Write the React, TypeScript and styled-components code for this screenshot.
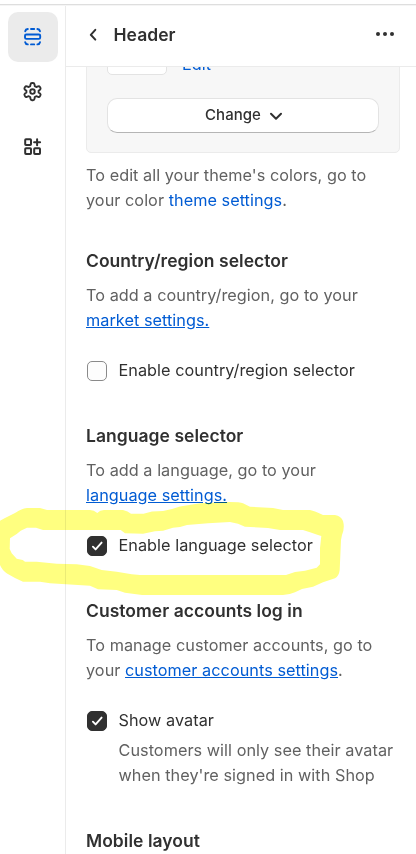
import React from 'react';
import styled, { createGlobalStyle } from 'styled-components';

const Global = createGlobalStyle`
  * { box-sizing: border-box; }
  body { margin: 0; background: #fff; overflow: hidden; }
`;

const Editor = styled.div`
  position: relative;
  width: 416px;
  height: 854px;
  overflow: hidden;
  display: flex;
  flex-direction: column;
  background: #fff;
  color: #303030;
  font: 400 16.25px/25px Inter, sans-serif;
  letter-spacing: 0.035px;
`;
const TopEdge = styled.div`
  flex: none;
  height: 6px;
  background: linear-gradient(#fff 0 4px, #dedede 4px 5px, #f5f5f5 5px 6px);
`;
const Body = styled.div`
  flex: 1;
  min-height: 0;
  display: flex;
`;
const Rail = styled.nav`
  width: 66px;
  flex: none;
  border-right: 1px solid #ebebeb;
  padding: 6px 7px 0 8px;
  display: flex;
  flex-direction: column;
  gap: 5px;
`;
const RailButton = styled.button<{ $active?: boolean }>`
  width: 50px;
  height: 50px;
  padding: 0;
  border: 0;
  border-radius: 10px;
  display: grid;
  place-items: center;
  background: ${p => (p.$active ? '#ebebeb' : 'transparent')};
  color: ${p => (p.$active ? '#005bd3' : '#303030')};
`;
const Panel = styled.main`
  flex: 1;
  min-width: 0;
  display: flex;
  flex-direction: column;
`;
const PanelHeader = styled.header`
  flex: none;
  height: 61px;
  padding: 0 18px 4px 20px;
  border-bottom: 1px solid #ebebeb;
  display: flex;
  align-items: center;
`;
const PanelTitle = styled.h1`
  flex: 1;
  margin: 0 0 0 13.5px;
  font-size: 17.5px;
  font-weight: 600;
  line-height: 25px;
`;
const IconButton = styled.button`
  border: 0;
  padding: 0;
  background: none;
  color: #303030;
  display: flex;
`;
const Scroller = styled.div`
  flex: 1;
  min-height: 0;
  overflow: hidden;
  padding: 0 16px 0 20px;
`;
const SchemeCard = styled.div`
  height: 126px;
  margin-top: -40px;
  padding: 0 20px;
  border: 1px solid #ebebeb;
  border-radius: 5px;
  background: #f7f7f7;
`;
const SchemeRow = styled.div`
  height: 47px;
  display: flex;
  align-items: flex-end;
  gap: 15px;
`;
const Swatch = styled.div`
  width: 60px;
  height: 46px;
  border: 1px solid #e3e3e3;
  border-radius: 5px;
  background: #fff;
`;
const Link = styled.a<{ $underline?: boolean }>`
  color: #005bd3;
  text-decoration: ${p => (p.$underline ? 'underline' : 'none')};
`;
const EditLink = styled(Link)`
  margin-bottom: -2px;
`;
const ChangeButton = styled.button`
  width: 100%;
  height: 35px;
  margin-top: 23px;
  padding: 0 0 2px 2px;
  border: 1px solid #e3e3e3;
  border-bottom-color: #b5b5b5;
  border-radius: 10px;
  background: #fff;
  color: #303030;
  font: 500 15px/20px Inter, sans-serif;
  letter-spacing: 0.03px;
  display: flex;
  align-items: center;
  justify-content: center;
  gap: 8px;
`;
const Text = styled.p`
  margin: 0;
  color: #616161;
`;
const Intro = styled(Text)`
  margin-top: 10px;
`;
const Section = styled.section`
  margin-top: 35px;

  & + & {
    margin-top: 40px;
  }
`;
const Heading = styled.h2`
  margin: 0 0 10px;
  font-size: 17.5px;
  line-height: 25px;
  font-weight: 600;
`;
const Option = styled.div`
  margin-top: 25px;
  display: grid;
  grid-template-columns: 20px 1fr;
  column-gap: 11.5px;
  padding-left: 1px;
`;
const Box = styled.span<{ $checked?: boolean }>`
  width: 20px;
  height: 20px;
  margin-top: 3px;
  border-radius: 5px;
  border: 1px solid ${p => (p.$checked ? '#303030' : '#8a8a8a')};
  background: ${p => (p.$checked ? '#303030' : '#fdfdfd')};
  display: grid;
  place-items: center;
`;
const Help = styled(Text)`
  grid-column: 2;
  margin-top: 5px;
`;
const Marker = styled.svg`
  position: absolute;
  inset: 0;
  pointer-events: none;
  mix-blend-mode: multiply;
`;

const stroke = { fill: 'none', stroke: 'currentColor', strokeWidth: 2, strokeLinecap: 'round' as const, strokeLinejoin: 'round' as const };

const SectionsIcon = () => (
  <svg width="26" height="26" viewBox="0 0 26 26" {...stroke} strokeWidth={1.9}>
    <rect x="5" y="10.5" width="15.2" height="4.4" rx="1.3" />
    <path d="M5.2 7.2Q5.6 5.2 7.8 5M11 5h3.2M17.4 5Q19.6 5.2 20 7.2M5.2 18.2Q5.6 20.2 7.8 20.4M11 20.4h3.2M17.4 20.4Q19.6 20.2 20 18.2" />
  </svg>
);
const GearIcon = () => (
  <svg width="26" height="26" viewBox="0 0 26 26" {...stroke} strokeWidth={1.9}>
    <path d="M10.5 5.3Q10.7 4 12 4h1Q14.3 4 14.5 5.3L14.8 7.2 16.2 8 18.1 7.3Q19.3 6.9 19.9 7.9L20.4 8.8Q21 9.9 20 10.7L18.6 11.8V13.4L20 14.5Q21 15.3 20.4 16.4L19.9 17.3Q19.3 18.3 18.1 17.9L16.2 17.2 14.8 18 14.5 19.9Q14.3 21.2 13 21.2H12Q10.7 21.2 10.5 19.9L10.2 18 8.8 17.2 6.9 17.9Q5.7 18.3 5.1 17.3L4.6 16.4Q4 15.3 5 14.5L6.4 13.4V11.8L5 10.7Q4 9.9 4.6 8.8L5.1 7.9Q5.7 6.9 6.9 7.3L8.8 8 10.2 7.2Z" />
    <circle cx="12.5" cy="12.6" r="2.3" />
  </svg>
);
const AppsIcon = () => (
  <svg width="26" height="26" viewBox="0 0 26 26" {...stroke}>
    <rect x="5.2" y="5.2" width="5.8" height="5.8" rx="0.8" />
    <rect x="5.2" y="14.2" width="5.8" height="5.8" rx="0.8" />
    <rect x="14.2" y="14.2" width="5.8" height="5.8" rx="0.8" />
    <path d="M17.1 5.2v6M14.1 8.2h6" />
  </svg>
);
const Tick = () => (
  <svg width="18" height="18" viewBox="0 0 18 18" fill="none" stroke="#fff" strokeWidth="1.9" strokeLinecap="round" strokeLinejoin="round">
    <path d="M4.9 9.7l2.7 2.7L13.6 5.6" />
  </svg>
);

const OUTER = 'M0 520.7L5 518 15 513Q23 508 27 508H40L47 510H90Q94 510 97.3 513Q100 510 104 510H123Q128 511 131 513.7H143.5L152 511.5 163 511 172 509 180 506.5 200 503.3 230 502Q240 502 243 503.3L250 506.7 273 508 283 510H310Q315 511 323 515H335Q341 516 343 521Q345 528 342 535L341 540 339.7 570Q339 576 335 578.3L323 582.3 313 586.7 302 589 295 592.3Q289 595 283 595H142L125 592.7 116.7 590 98 589.3 90 585.7 50 583.3 40 581.7H23L15 578 7 573.5Q2 570 0 565Z';
const INNER = 'M10 538.3L16.7 534 20.7 530.7 27 527.7H36L43 530H120.7L125 533.3 143 533.7 155 531.3 163 530.7 173 527.7 180 527 187 525 208 523.3 230 522 238 523.7 245 526.7 268 528 280 530H303L310 532.3 318 535 321.3 536 320 548V564.3L316.7 567.7 305 570.7 295 572 286 575H140L131.7 574.3 116.7 571.7 101.7 570 90 566 76.7 564.3 56.7 563.7 36.7 561.7H25L22.7 560 16.7 558.7 11.7 553.3 9.7 549Z';

function Checkbox({ label, checked, help }: { label: string; checked?: boolean; help?: string }) {
  return (
    <Option>
      <Box $checked={checked}>{checked && <Tick />}</Box>
      <span>{label}</span>
      {help && <Help>{help}</Help>}
    </Option>
  );
}

export default function App() {
  return (
    <Editor>
      <Global />
      <TopEdge />
      <Body>
        <Rail>
          <RailButton $active aria-label="Sections"><SectionsIcon /></RailButton>
          <RailButton aria-label="Theme settings"><GearIcon /></RailButton>
          <RailButton aria-label="App embeds"><AppsIcon /></RailButton>
        </Rail>
        <Panel>
          <PanelHeader>
            <IconButton aria-label="Back">
              <svg width="14" height="16" viewBox="0 0 14 16" {...stroke}><path d="M9.3 3.8L4.8 8.8 9.3 13.6" /></svg>
            </IconButton>
            <PanelTitle>Header</PanelTitle>
            <IconButton aria-label="More actions">
              <svg width="26" height="20" viewBox="0 0 26 20" fill="currentColor"><circle cx="6" cy="10" r="2" /><circle cx="13" cy="10" r="2" /><circle cx="20" cy="10" r="2" /></svg>
            </IconButton>
          </PanelHeader>
          <Scroller>
            <SchemeCard>
              <SchemeRow>
                <Swatch />
                <EditLink>Edit</EditLink>
              </SchemeRow>
              <ChangeButton>
                Change
                <svg width="14" height="14" viewBox="0 0 14 14" {...stroke}><path d="M2 5.8l5 5 5-5" /></svg>
              </ChangeButton>
            </SchemeCard>
            <Intro>To edit all your theme's colors, go to your color <Link>theme settings</Link>.</Intro>
            <Section>
              <Heading>Country/region selector</Heading>
              <Text>To add a country/region, go to your <Link $underline>market settings.</Link></Text>
              <Checkbox label="Enable country/region selector" />
            </Section>
            <Section>
              <Heading>Language selector</Heading>
              <Text>To add a language, go to your <br /><Link $underline>language settings.</Link></Text>
              <Checkbox label="Enable language selector" checked />
            </Section>
            <Section>
              <Heading>Customer accounts log in</Heading>
              <Text>To manage customer accounts, go to your <Link $underline>customer accounts settings</Link>.</Text>
              <Checkbox label="Show avatar" checked help="Customers will only see their avatar when they're signed in with Shop" />
            </Section>
            <Section>
              <Heading>Mobile layout</Heading>
            </Section>
          </Scroller>
        </Panel>
      </Body>
      <Marker width="416" height="854" viewBox="0 0 416 854">
        <path d={OUTER + INNER} fill="#ffff80" fillRule="evenodd" />
      </Marker>
    </Editor>
  );
}
